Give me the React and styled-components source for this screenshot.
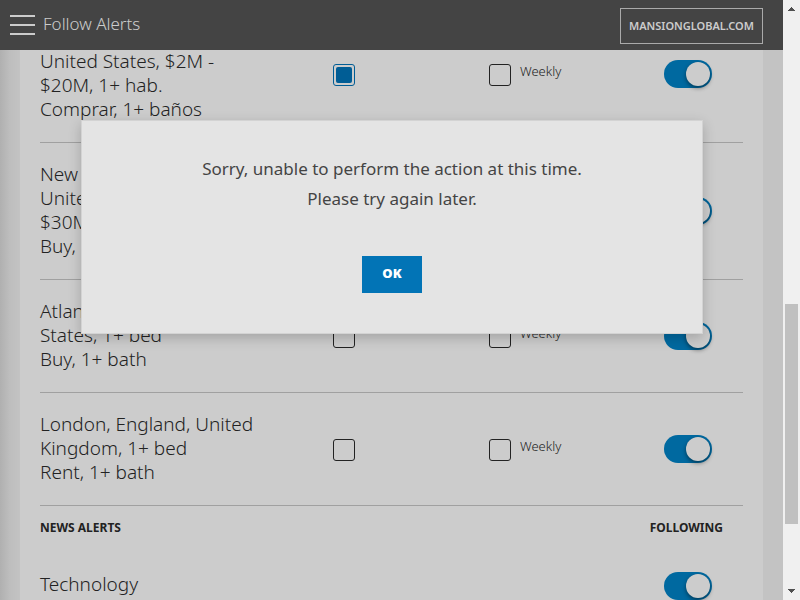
import React from "react";
import styled, { createGlobalStyle } from "styled-components";

const GlobalStyle = createGlobalStyle`
  *, *::before, *::after { box-sizing: border-box; }
  body {
    margin: 0;
    overflow: hidden;
    color: #222;
    font-family: "Noto Sans", "Open Sans", sans-serif;
  }
`;

const Frame = styled.div`
  display: flex;
  height: 100vh;
  overflow: hidden;
`;

const Page = styled.div`
  position: relative;
  flex: 1;
  min-width: 0;
  display: flex;
  flex-direction: column;
  background: #c3c3c3;
`;

const Header = styled.header`
  flex: none;
  height: 50px;
  display: flex;
  align-items: center;
  padding: 0 20px 0 10px;
  background: #444;
  color: #ccc;
`;

const MenuButton = styled.button`
  display: flex;
  width: 25px;
  height: 20px;
  padding: 0;
  border: 0;
  background: none;
  color: inherit;
`;

const Title = styled.h1`
  flex: 1;
  margin: 0 0 2px 8px;
  font-size: 17px;
  font-weight: 300;
  line-height: 24px;
`;

const SiteLink = styled.a`
  display: flex;
  align-items: center;
  height: 36px;
  margin-top: 2px;
  padding: 0 8px 2px;
  border: 1px solid #aaa;
  color: #ccc;
  font-size: 11px;
  font-weight: 600;
  text-decoration: none;
`;

const Content = styled.main`
  flex: 1;
  min-height: 0;
  overflow: hidden;
  padding: 0 20px;
  background: linear-gradient(to right, #b0b0b0, #bebebe 10px, #c3c3c3 20px);
`;

const Card = styled.div`
  padding: 0 20px;
  min-height: 100%;
  background: #ccc;
`;

const AlertList = styled.ul`
  margin: -44px 0 0;
  padding: 0;
  list-style: none;
`;

const AlertRow = styled.li`
  display: grid;
  grid-template-columns: 293fr 156fr 175fr 48px 31px;
  align-items: center;
  min-height: ${(p) => (p.$tall ? 137 : 113)}px;
  padding: 19px 0 20px;
  border-bottom: 1px solid #a0a0a0;
`;

const AlertName = styled.span`
  align-self: end;
  padding-bottom: 1px;
  font-size: 19px;
  font-weight: 300;
  line-height: 24px;
  white-space: pre-line;
`;

const Option = styled.label`
  display: flex;
  align-items: center;
  gap: 9px;
  padding-top: 3px;
  font-size: 13px;
  font-weight: 300;
  line-height: 18px;
`;

const OptionText = styled.span`
  padding-bottom: 6px;
  margin-top: -2px;
`;

const CheckBox = styled.input`
  appearance: none;
  flex: none;
  width: 22px;
  height: 22px;
  margin: 0;
  border: 1px solid #222;
  border-radius: 3px;

  &:checked {
    padding: 2px;
    border-color: #005d95;
  }

  &:checked::before {
    content: "";
    display: block;
    height: 100%;
    border-radius: 2px;
    background: #005d95;
  }
`;

const Switch = styled.input`
  appearance: none;
  display: flex;
  align-items: center;
  justify-content: flex-end;
  width: 48px;
  height: 28px;
  margin: 0;
  padding: 2px;
  border-radius: 14px;
  background: #0069a0;

  &::before {
    content: "";
    width: 24px;
    height: 24px;
    border-radius: 50%;
    background: #ccc;
    box-shadow: 0 2px 4px rgba(0, 0, 0, 0.45);
  }
`;

const SectionHead = styled.div`
  display: flex;
  justify-content: space-between;
  padding: 12px 20px 0 0;
`;

const SectionTitle = styled.h2`
  margin: 0;
  font-size: 12px;
  font-weight: 700;
  line-height: 20px;
`;

const NewsRow = styled.div`
  display: grid;
  grid-template-columns: 1fr 48px 31px;
  align-items: center;
  padding: 34px 0 20px;
`;

const NewsName = styled(AlertName)`
  align-self: start;
`;

const Overlay = styled.div`
  position: absolute;
  inset: 0;
  display: flex;
  align-items: flex-start;
  padding: 120px 80px 0 81px;
`;

const Dialog = styled.section`
  flex: 1;
  display: flex;
  flex-direction: column;
  align-items: center;
  padding: 33px 20px 40px;
  border: 1px solid #d3d3d3;
  background: #e4e4e4;
  box-shadow: 0 4px 12px rgba(0, 0, 0, 0.2);
`;

const Message = styled.p`
  margin: 0 0 42px;
  color: #444;
  font-size: 17px;
  font-weight: 400;
  line-height: 30px;
  text-align: center;
`;

const OkButton = styled.button`
  height: 37px;
  padding: 0 20px 3px;
  border: 0;
  background: #0274b6;
  color: #fff;
  font: 900 13px "Noto Sans", sans-serif;
`;

const Scrollbar = styled.div`
  flex: none;
  width: 17px;
  display: flex;
  flex-direction: column;
  padding: 0 2px;
  background: #f0f0f0;
`;

const ScrollArrow = styled.button`
  display: grid;
  place-items: center;
  height: 17px;
  padding: 0;
  border: 0;
  background: none;
  transform: ${(p) => (p.$down ? "rotate(180deg)" : "none")};
`;

const ScrollTrack = styled.div`
  flex: 1;
  display: grid;
  grid-template-rows: 287fr 220fr 59fr;
`;

const ScrollThumb = styled.div`
  grid-row: 2;
  background: #c0c0c0;
`;

const ALERTS = [
  { name: "United States, $2M -\n$20M, 1+ hab.\nComprar, 1+ baños", tall: true, daily: true },
  { name: "New York, New York,\nUnited States, $2M -\n$30M, 1+ bed\nBuy, 1+ bath", tall: true },
  { name: "Atlanta, Georgia, United\nStates, 1+ bed\nBuy, 1+ bath" },
  { name: "London, England, United\nKingdom, 1+ bed\nRent, 1+ bath" },
];

function Arrow({ down }) {
  return (
    <ScrollArrow $down={down} aria-label={down ? "Scroll down" : "Scroll up"}>
      <svg width="7" height="4" viewBox="0 0 7 4" fill="#505050" shapeRendering="crispEdges">
        <path d="M3 0h1v1h1v1h1v1h1v1H0V3h1V2h1V1h1z" />
      </svg>
    </ScrollArrow>
  );
}

export default function App() {
  return (
    <Frame>
      <GlobalStyle />
      <Page>
        <Header>
          <MenuButton aria-label="Menu">
            <svg width="25" height="20" viewBox="0 0 25 20" fill="currentColor">
              <path d="M0 0h25v2H0zM0 9h25v2H0zM0 18h25v2H0z" />
            </svg>
          </MenuButton>
          <Title>Follow Alerts</Title>
          <SiteLink href="#mansionglobal">MANSIONGLOBAL.COM</SiteLink>
        </Header>
        <Content>
          <Card>
            <AlertList>
              {ALERTS.map((a) => (
                <AlertRow key={a.name} $tall={a.tall}>
                  <AlertName>{a.name}</AlertName>
                  <Option>
                    <CheckBox type="checkbox" defaultChecked={a.daily} aria-label="Daily" />
                  </Option>
                  <Option>
                    <CheckBox type="checkbox" />
                    <OptionText>Weekly</OptionText>
                  </Option>
                  <Switch type="checkbox" role="switch" defaultChecked aria-label="Following" />
                </AlertRow>
              ))}
            </AlertList>
            <SectionHead>
              <SectionTitle>NEWS ALERTS</SectionTitle>
              <SectionTitle>FOLLOWING</SectionTitle>
            </SectionHead>
            <NewsRow>
              <NewsName>Technology</NewsName>
              <Switch type="checkbox" role="switch" defaultChecked aria-label="Following Technology" />
            </NewsRow>
          </Card>
        </Content>
        <Overlay>
          <Dialog role="alertdialog" aria-modal="true" aria-labelledby="message">
            <Message id="message">
              Sorry, unable to perform the action at this time.
              <br />
              Please try again later.
            </Message>
            <OkButton>OK</OkButton>
          </Dialog>
        </Overlay>
      </Page>
      <Scrollbar>
        <Arrow />
        <ScrollTrack>
          <ScrollThumb />
        </ScrollTrack>
        <Arrow down />
      </Scrollbar>
    </Frame>
  );
}
